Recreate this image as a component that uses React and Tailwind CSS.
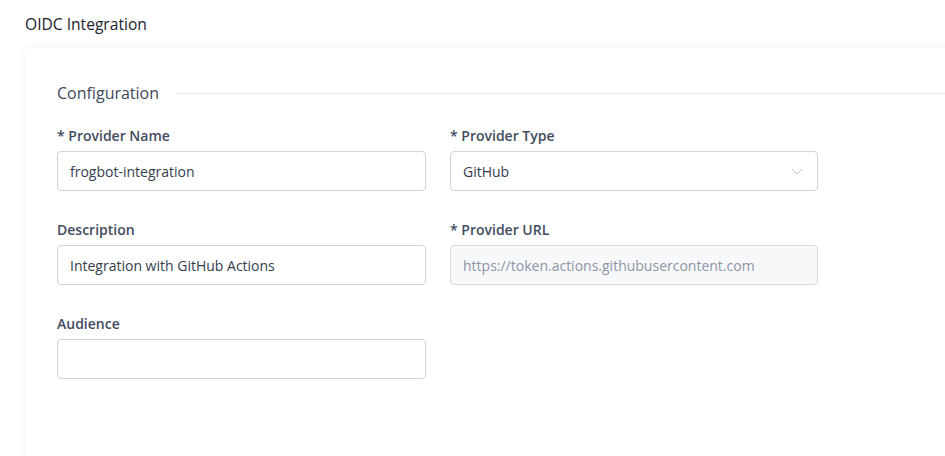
import React from "react";

function Field({ label, children }) {
  return (
    <div className="flex flex-col">
      <label className="h-5 pt-px text-[14px] leading-5 font-semibold text-[#414c5e]">{label}</label>
      <div className="mt-[6px]">{children}</div>
    </div>
  );
}

function Box({ value, disabled, select }) {
  return (
    <div
      className={
        "flex h-[40px] items-center justify-between rounded-[4px] border px-[12px] text-[14px] " +
        (disabled
          ? "border-[#d3d8e2] bg-[#f7f8fa] text-[#8c95a6]"
          : "border-[#cdd3df] bg-white text-[#333d4d]")
      }
    >
      <span>{value}</span>
      {select && (
        <svg width="12" height="7" viewBox="0 0 12 7" className="mr-[2px]">
          <path d="M1 1 L6 6 L11 1" fill="none" stroke="#c3c8d2" strokeWidth="1" />
        </svg>
      )}
    </div>
  );
}

export default function App() {
  return (
    <div
      className="h-[456px] w-[945px] overflow-hidden bg-white"
      style={{ fontFamily: '"Open Sans", "Noto Sans", sans-serif' }}
    >
      <div className="px-[25px] pt-[14px] text-[15.6px] leading-5 text-[#1b212c]">OIDC Integration</div>
      <div className="ml-[25px] mt-[14px] h-[500px] w-[960px] bg-white pl-[32px] pt-[33px] shadow-[0_0_10px_rgba(0,0,0,0.06)]">
        <div className="flex items-center">
          <span className="text-[16px] leading-6 text-[#3e4859]">Configuration</span>
          <div className="ml-[17px] h-px flex-1 bg-[#eceef1]" />
        </div>
        <div className="mt-[20px] grid grid-cols-[369px_368px] gap-x-[24px] gap-y-[28px]">
          <Field label="* Provider Name">
            <Box value="frogbot-integration" />
          </Field>
          <Field label="* Provider Type">
            <Box value="GitHub" select />
          </Field>
          <Field label="Description">
            <Box value="Integration with GitHub Actions" />
          </Field>
          <Field label="* Provider URL">
            <Box value="https://token.actions.githubusercontent.com" disabled />
          </Field>
          <Field label="Audience">
            <Box value="" />
          </Field>
        </div>
      </div>
    </div>
  );
}
